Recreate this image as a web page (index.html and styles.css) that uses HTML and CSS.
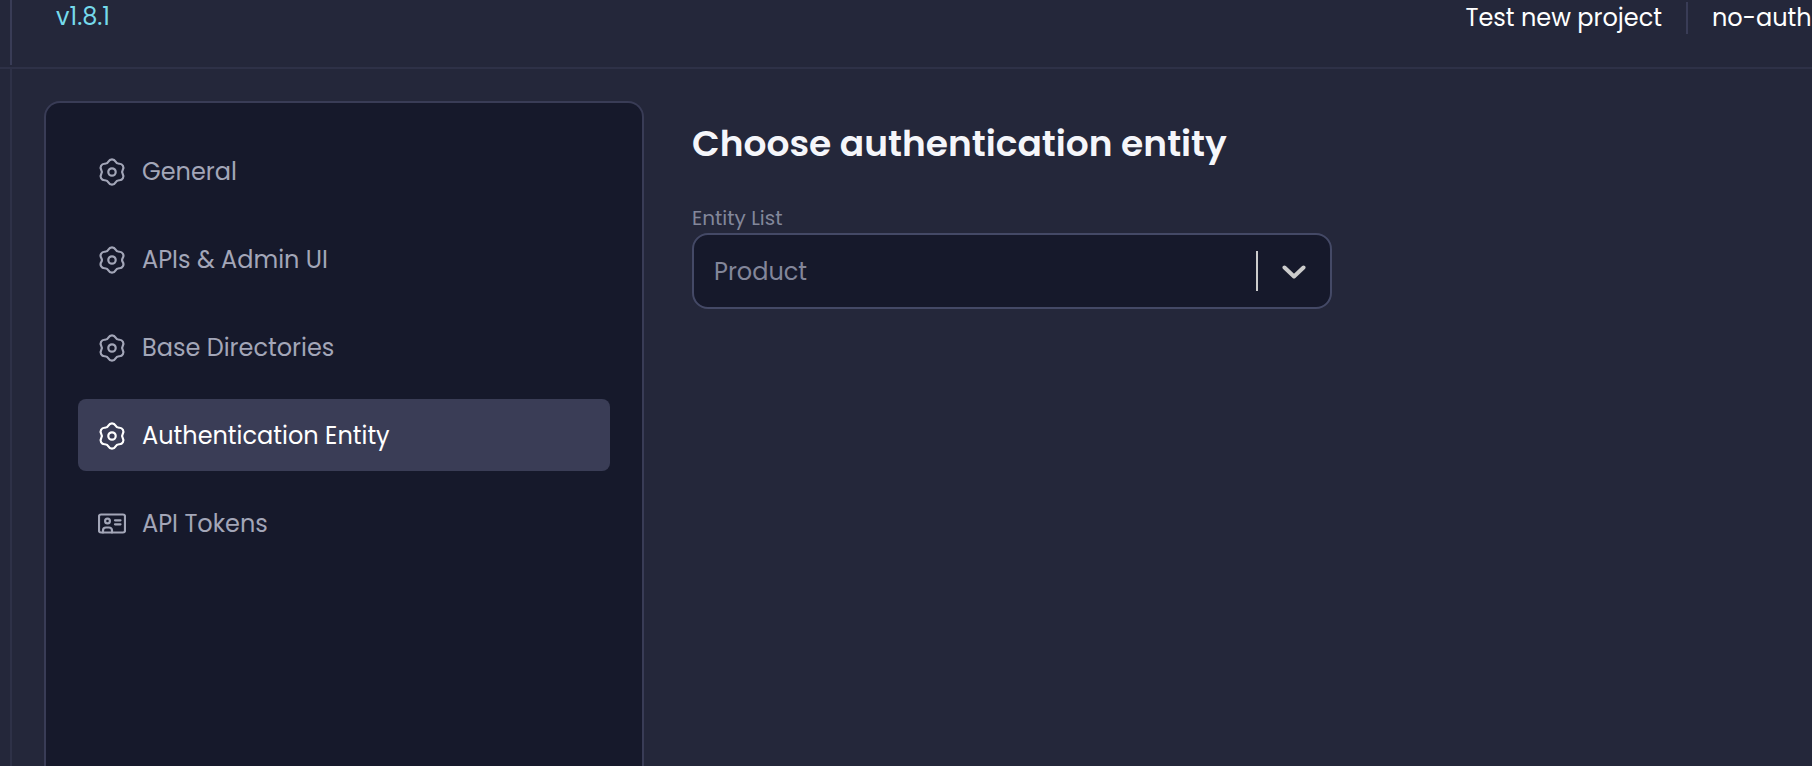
FILE: index.html
```html
<!DOCTYPE html>
<html lang="en">
<head>
<meta charset="utf-8">
<meta name="viewport" content="width=device-width, initial-scale=1">
<title>Settings - Authentication Entity</title>
<link rel="stylesheet" href="styles.css">
</head>
<body>
<svg class="sprite" aria-hidden="true">
  <symbol id="gear" viewBox="0 0 28 28">
    <path d="M10.51 3.57A3.92 3.92 0 0 1 17.49 3.57A4.03 4.03 0 0 0 21.29 5.76A3.92 3.92 0 0 1 24.78 11.81A4.03 4.03 0 0 0 24.78 16.19A3.92 3.92 0 0 1 21.29 22.24A4.03 4.03 0 0 0 17.49 24.43A3.92 3.92 0 0 1 10.51 24.43A4.03 4.03 0 0 0 6.71 22.24A3.92 3.92 0 0 1 3.22 16.19A4.03 4.03 0 0 0 3.22 11.81A3.92 3.92 0 0 1 6.71 5.76A4.03 4.03 0 0 0 10.51 3.57Z"/>
    <circle cx="14" cy="14" r="3.7"/>
  </symbol>
  <symbol id="id-card" viewBox="0 0 28 28">
    <rect x="1" y="4.5" width="26" height="18" rx="2"/>
    <circle cx="9.5" cy="11" r="2.4"/>
    <path d="M5 22.5v-2a3 3 0 0 1 3-3h3a3 3 0 0 1 3 3v2M17 10.3h5.5M17 14.3h5.5"/>
  </symbol>
</svg>
<div class="app">
  <header class="topbar">
    <div class="topbar-rail"></div>
    <span class="version">v1.8.1</span>
    <div class="workspace">
      <span class="project">Test new project</span>
      <span class="resource">no-auth</span>
    </div>
  </header>
  <div class="body">
    <div class="rail"></div>
    <nav class="sidebar" aria-label="Settings">
      <a class="item" href="#general"><svg class="icon"><use href="#gear"/></svg>General</a>
      <a class="item" href="#apis"><svg class="icon"><use href="#gear"/></svg>APIs &amp; Admin UI</a>
      <a class="item" href="#directories"><svg class="icon"><use href="#gear"/></svg>Base Directories</a>
      <a class="item active" href="#auth" aria-current="page"><svg class="icon"><use href="#gear"/></svg>Authentication Entity</a>
      <a class="item" href="#tokens"><svg class="icon"><use href="#id-card"/></svg>API Tokens</a>
    </nav>
    <main class="content">
      <h1 class="title">Choose authentication entity</h1>
      <label class="label" for="entity">Entity List</label>
      <div class="field">
        <select class="select" id="entity">
          <option>Product</option>
        </select>
        <div class="indicator">
          <svg class="chevron" viewBox="0 0 24 14" aria-hidden="true"><path d="M2.5 2.5L12 11.5L21.5 2.5"/></svg>
        </div>
      </div>
    </main>
  </div>
</div>
</body>
</html>
```
FILE: styles.css
```css
* {
  box-sizing: border-box;
}

body {
  margin: 0;
  background: #24273a;
  color: #fff;
  font-family: Poppins, Inter, "Noto Sans", sans-serif;
  font-size: 24px;
  line-height: 32px;
}

.sprite {
  display: none;
}

.app {
  display: flex;
  flex-direction: column;
  min-height: 100vh;
}

.topbar {
  display: flex;
  align-items: flex-start;
  padding-bottom: 2px;
  border-bottom: 2px solid #2e3147;
}

.topbar-rail {
  width: 12px;
  height: 65px;
  border-right: 2px solid #393c56;
}

.version {
  margin: 1px 0 0 44px;
  color: #76daeb;
}

.workspace {
  display: flex;
  margin: 2px 0 0 auto;
}

.project {
  padding-right: 24px;
  border-right: 2px solid #393c56;
}

.resource {
  width: 124px;
  padding-left: 24px;
  overflow: hidden;
  white-space: nowrap;
}

.body {
  display: flex;
  flex: 1;
}

.rail {
  width: 12px;
  border-right: 2px solid #2e3147;
}

.sidebar {
  display: flex;
  flex: 0 0 600px;
  flex-direction: column;
  gap: 16px;
  margin: 32px 0 0 32px;
  padding: 32px;
  border: 2px solid #393c56;
  border-bottom: 0;
  border-radius: 16px 16px 0 0;
  background: #16192b;
}

.item {
  display: flex;
  align-items: center;
  gap: 16px;
  padding: 21px 20px 19px;
  border-radius: 8px;
  color: #a3a6b8;
  text-decoration: none;
}

.active {
  background: #3a3d56;
  color: #fff;
}

.icon {
  width: 28px;
  height: 28px;
  fill: none;
  stroke: currentColor;
  stroke-width: 2.2;
  stroke-linecap: round;
  stroke-linejoin: round;
}

.content {
  flex: 1;
  padding: 51px 48px 0;
}

.title {
  margin: 0 0 35px;
  color: #f5f6fa;
  font-size: 36px;
  font-weight: 600;
  line-height: 48px;
}

.label {
  display: block;
  color: #83879b;
  font-size: 20px;
  line-height: 30px;
}

.field {
  position: relative;
  max-width: 640px;
}

.select {
  display: block;
  width: 100%;
  height: 76px;
  padding: 2px 96px 0 20px;
  border: 2px solid #444966;
  border-radius: 16px;
  appearance: none;
  background: #16192b;
  color: #83869a;
  font: inherit;
}

.indicator {
  position: absolute;
  top: 18px;
  right: 26px;
  display: flex;
  align-items: center;
  height: 40px;
  padding: 2px 0 0 24px;
  border-left: 2px solid #ccc;
  pointer-events: none;
}

.chevron {
  width: 24px;
  height: 14px;
  fill: none;
  stroke: #ccc;
  stroke-width: 4;
  stroke-linecap: round;
  stroke-linejoin: round;
}
```
